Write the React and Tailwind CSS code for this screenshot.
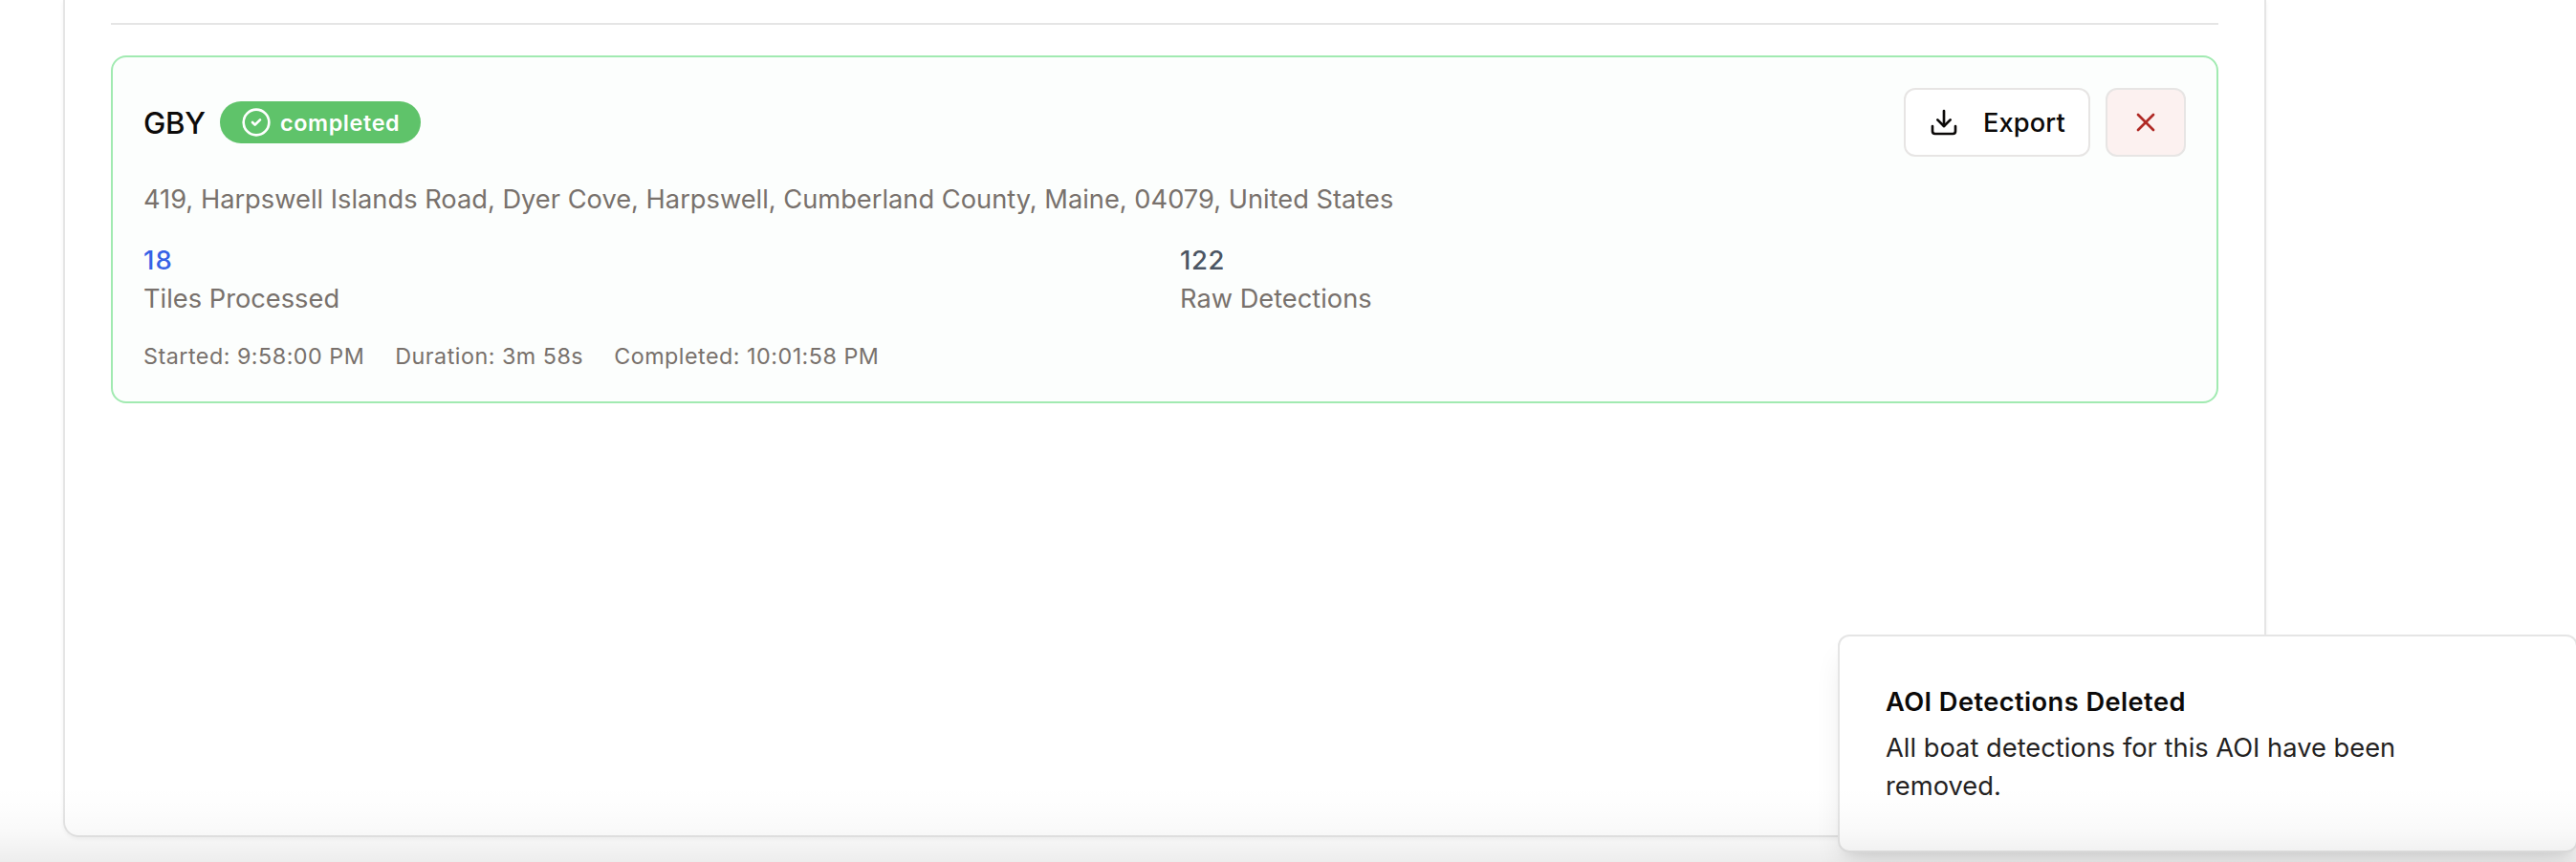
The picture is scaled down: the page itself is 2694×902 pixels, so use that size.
import { CircleCheck, Download, X } from "lucide-react";

function Badge() {
  return (
    <span className="flex h-11 w-[210px] items-center gap-2 rounded-full bg-[#5fc36a] pl-[22px] text-white">
      <CircleCheck size={32} strokeWidth={2} className="shrink-0" />
      <span className="pt-px pl-px text-[23.3px] leading-8 font-semibold tracking-[0.65px] whitespace-nowrap">completed</span>
    </span>
  );
}

function Stat({ value, label, valueClass }) {
  return (
    <div>
      <div className={`text-[27.5px] leading-10 font-medium ${valueClass}`}>{value}</div>
      <div className="-mb-px pt-px text-[27.25px] leading-10 text-[#78716c]">{label}</div>
    </div>
  );
}

function JobCard() {
  return (
    <article className="rounded-2xl border-2 border-[#a1eab1] bg-[#fcfefd] p-8">
      <header className="flex h-18 items-center justify-between">
        <div className="flex items-center">
          <h3 className="w-20 pt-0.5 text-[31.2px] leading-10 font-medium tracking-[-0.3px]">GBY</h3>
          <Badge />
        </div>
        <div className="flex gap-4">
          <button className="flex h-18 w-[195px] items-center gap-6 rounded-xl border-2 border-[#e7e5e4] bg-white pl-6">
            <Download size={32} strokeWidth={2} className="shrink-0" />
            <span className="pt-px pl-px text-[27.25px] leading-10 font-medium tracking-[0.1px]">Export</span>
          </button>
          <button className="flex h-18 w-21 items-center justify-center rounded-xl border-2 border-[#e7e5e4] bg-[#fcf1f0] text-[#b02a25]">
            <X size={32} strokeWidth={2} />
          </button>
        </div>
      </header>
      <p className="mt-6 -mb-px pt-px text-[27.25px] leading-10 whitespace-nowrap text-[#78716c]">
        419, Harpswell Islands Road, Dyer Cove, Harpswell, Cumberland County, Maine, 04079, United States
      </p>
      <div className="mt-6 grid grid-cols-2 gap-8">
        <Stat value="18" label="Tiles Processed" valueClass="text-[#3661e6] tracking-[1.2px]" />
        <Stat value="122" label="Raw Detections" valueClass="text-[#4b5563] tracking-[0.6px]" />
      </div>
      <div className="mt-[25px] -mb-px flex gap-[32px] text-[23.3px] leading-8 tracking-[0.5px] text-[#78716c]">
        <span>Started: 9:58:00 PM</span>
        <span>Duration: 3m 58s</span>
        <span>Completed: 10:01:58 PM</span>
      </div>
    </article>
  );
}

function Toast() {
  return (
    <div className="absolute top-[664px] left-[1922px] h-[228px] w-[774px] rounded-xl border-2 border-[#e5e5e5] bg-white px-12 pt-[49px] pb-12 shadow-[0_20px_30px_-6px_rgba(0,0,0,0.1),0_8px_12px_-8px_rgba(0,0,0,0.1)]">
      <div className="text-[27.25px] leading-10 font-semibold tracking-[0.42px]">AOI Detections Deleted</div>
      <div className="mt-2 w-[560px] text-[27.3px] leading-10 opacity-90">
        All boat detections for this AOI have been removed.
      </div>
    </div>
  );
}

export default function App() {
  return (
    <div className="relative h-[902px] w-[2694px] overflow-hidden bg-white font-['Inter','Liberation_Sans',sans-serif] text-[#0c0a09]">
      <main className="ml-[66px] h-[876px] w-[2304px] rounded-b-2xl border-2 border-t-0 border-[#e5e5e5] px-12 pt-6 shadow-[0_2px_4px_0_rgba(0,0,0,0.05)]">
        <div className="mb-8 h-0.5 bg-[#e5e5e5]" />
        <JobCard />
      </main>
      <Toast />
      <div className="pointer-events-none absolute inset-x-0 bottom-0 h-20 bg-[linear-gradient(to_bottom,transparent,rgba(0,0,0,0.006)_30%,rgba(0,0,0,0.025)_60%,rgba(0,0,0,0.07))]" />
    </div>
  );
}
